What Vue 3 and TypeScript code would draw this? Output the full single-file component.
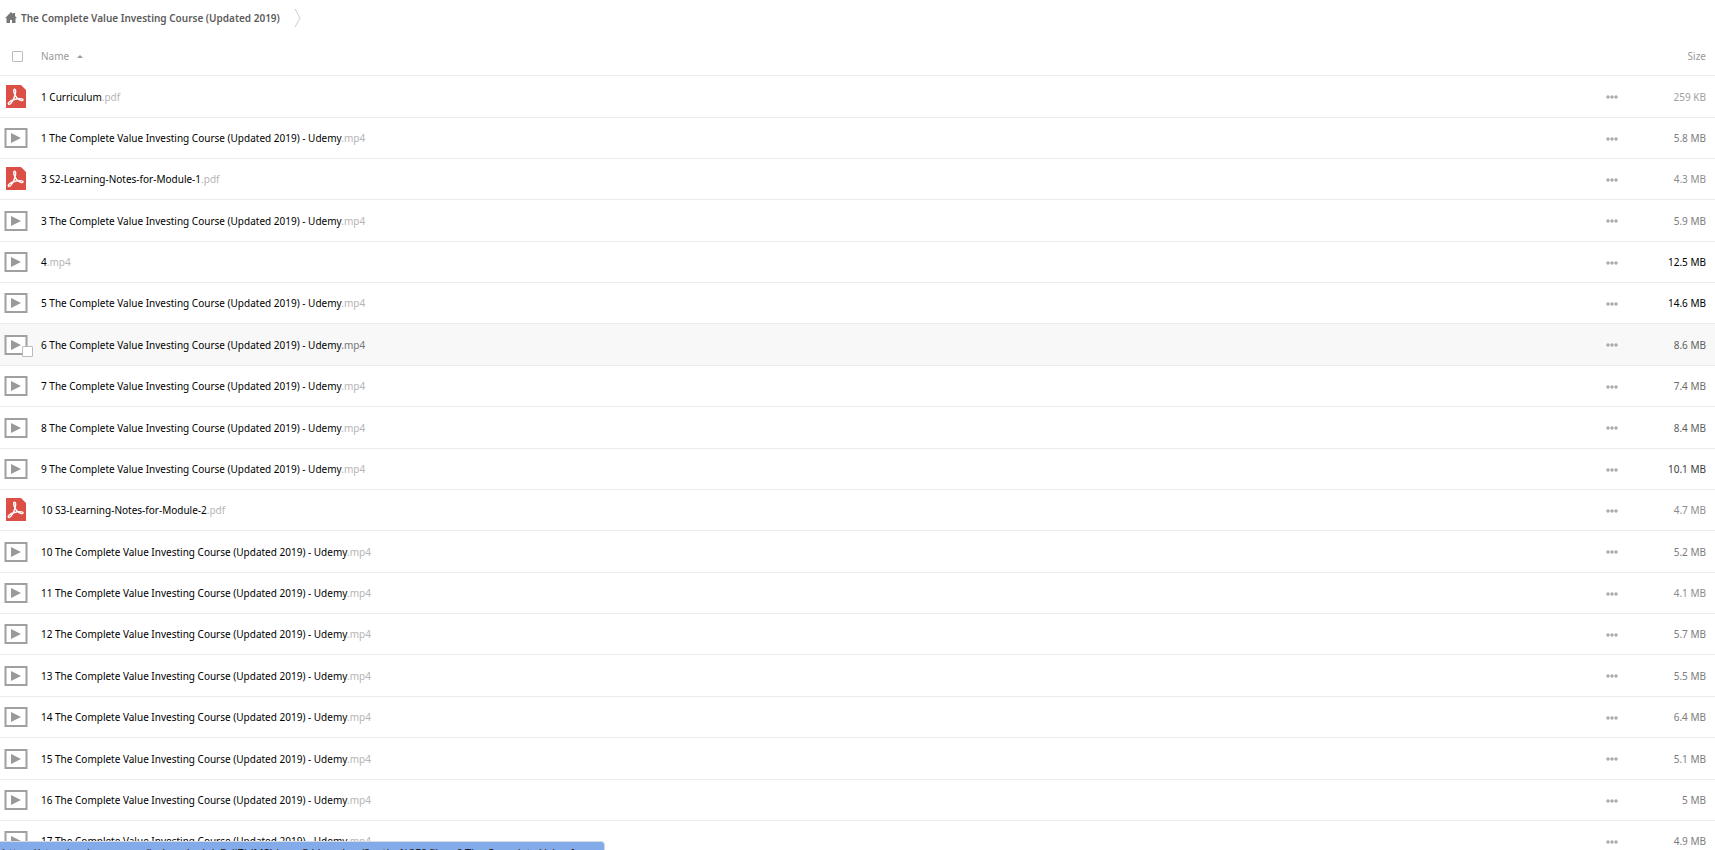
<script setup lang="ts">
import { ref } from 'vue'

interface FileEntry {
  name: string
  ext: 'pdf' | 'mp4'
  size: string
  tone: string
}

const course = 'The Complete Value Investing Course (Updated 2019)'
const lesson = (n: number, size: string, tone: string): FileEntry => ({
  name: `${n} ${course} - Udemy`,
  ext: 'mp4',
  size,
  tone,
})

const files: FileEntry[] = [
  { name: '1 Curriculum', ext: 'pdf', size: '259 KB', tone: 'faint' },
  lesson(1, '5.8 MB', 'mid'),
  { name: '3 S2-Learning-Notes-for-Module-1', ext: 'pdf', size: '4.3 MB', tone: 'soft' },
  lesson(3, '5.9 MB', 'mid'),
  { name: '4', ext: 'mp4', size: '12.5 MB', tone: 'black' },
  lesson(5, '14.6 MB', 'black'),
  lesson(6, '8.6 MB', 'strong'),
  lesson(7, '7.4 MB', 'firm'),
  lesson(8, '8.4 MB', 'strong'),
  lesson(9, '10.1 MB', 'dark'),
  { name: '10 S3-Learning-Notes-for-Module-2', ext: 'pdf', size: '4.7 MB', tone: 'soft' },
  lesson(10, '5.2 MB', 'mid'),
  lesson(11, '4.1 MB', 'soft'),
  lesson(12, '5.7 MB', 'mid'),
  lesson(13, '5.5 MB', 'mid'),
  lesson(14, '6.4 MB', 'mid'),
  lesson(15, '5.1 MB', 'mid'),
  lesson(16, '5 MB', 'mid'),
  lesson(17, '4.9 MB', 'mid'),
]

const active = 6
const allSelected = ref(false)
const activeSelected = ref(false)
</script>

<template>
  <main class="page">
    <nav class="crumbs" aria-label="Breadcrumb">
      <a class="home" href="#">
        <svg width="12" height="11" viewBox="0 0 12 11" aria-hidden="true">
          <path d="M6 0 8 2V1h2v3l2 2.200h-1.500V11H7V8H5v3H1.500V6.200H0z" fill="#777" />
        </svg>
        <span>{{ course }}</span>
      </a>
      <svg class="sep" width="8" height="20" viewBox="0 0 8 20" aria-hidden="true">
        <path d="M1 1 6 10 1 19" fill="none" stroke="#ccc" />
      </svg>
    </nav>

    <table class="files">
      <thead>
        <tr>
          <th class="pick"><input v-model="allSelected" type="checkbox" aria-label="Select all" /></th>
          <th class="name">
            <button type="button" class="sort">
              Name
              <svg width="6" height="3" viewBox="0 0 6 3" aria-hidden="true"><path d="M0 3 3 0 6 3z" fill="#999" /></svg>
            </button>
          </th>
          <th class="more"></th>
          <th class="size"><button type="button" class="sort">Size</button></th>
        </tr>
      </thead>
      <tbody>
        <tr v-for="(file, i) in files" :key="i" :class="{ active: i === active }">
          <td class="pick">
            <span class="thumb">
              <svg v-if="file.ext === 'pdf'" width="24" height="24" viewBox="0 0 24 24" aria-hidden="true">
                <path d="M2 0h15l5 5v18H2z" fill="#dc4f46" />
                <path
                  d="M10 4.500c2-1 2 2 1 5.500-1 4-4 9.500-6 9.500-2.500-1 1.500-4 5.500-5 4-1.200 8.500-1.200 8.500.3 0 1.700-4 .5-6-1.800-2.500-3-4-7.500-3-8.500z"
                  fill="none"
                  stroke="#fff"
                  stroke-width="1.400"
                />
              </svg>
              <svg v-else width="24" height="24" viewBox="0 0 24 24" aria-hidden="true">
                <rect x="1.500" y="3" width="21" height="18" fill="#fff" stroke="#a0a0a0" stroke-width="2" />
                <path d="M7 7v10l10-5z" fill="#999" />
              </svg>
              <input
                v-if="i === active"
                v-model="activeSelected"
                type="checkbox"
                class="badge"
                :aria-label="`Select ${file.name}`"
              />
            </span>
          </td>
          <td class="name">
            <a href="#">{{ file.name }}<span class="ext">.{{ file.ext }}</span></a>
          </td>
          <td class="more">
            <button type="button" :aria-label="`Actions for ${file.name}`">
              <svg width="12" height="4" viewBox="0 0 12 4" aria-hidden="true">
                <circle cx="2" cy="2" r="1.700" /><circle cx="6" cy="2" r="1.700" /><circle cx="10" cy="2" r="1.700" />
              </svg>
            </button>
          </td>
          <td class="size" :class="file.tone">{{ file.size }}</td>
        </tr>
      </tbody>
    </table>

    <div class="status">
      https://stor.cloudspace.com/index.php/s/eDdjZjdMShirwwQ/download?path=%2F&amp;files=6 The Complete Value I...
    </div>
  </main>
</template>

<style>
body {
  margin: 0;
  background: #fff;
}
</style>

<style scoped>
.page {
  height: 100vh;
  overflow: hidden;
  font: 10px/16px "Noto Sans", "Open Sans", sans-serif;
  color: #000;
}
a {
  color: inherit;
  text-decoration: none;
}
button {
  padding: 0;
  border: 0;
  background: none;
  color: inherit;
  font: inherit;
}
.crumbs {
  display: flex;
  align-items: center;
  gap: 14px;
  height: 35px;
  padding-left: 5px;
  box-sizing: border-box;
}
.home {
  display: flex;
  align-items: center;
  gap: 4px;
  font-weight: 600;
  color: #5c5c5c;
}
.files {
  width: 100%;
  table-layout: fixed;
  border-collapse: separate;
  border-spacing: 0;
}
th,
td {
  padding: 0;
  height: 40px;
  border-bottom: 1px solid #ebebeb;
  font-weight: 400;
  text-align: left;
  vertical-align: middle;
}
tr:is(:nth-child(1), :nth-child(4), :nth-child(7), :nth-child(9), :nth-child(12), :nth-child(15), :nth-child(17)) td {
  height: 41px;
}
thead tr:nth-child(1) th {
  height: 38px;
  padding-top: 2px;
  color: #999;
}
th.pick,
td.pick {
  width: 41px;
}
th.more,
td.more {
  width: 30px;
}
th.size,
td.size {
  width: 70px;
  padding-right: 9px;
  text-align: right;
}
.sort {
  display: inline-flex;
  align-items: center;
  gap: 8px;
}
input {
  appearance: none;
  display: block;
  box-sizing: border-box;
  width: 11px;
  height: 11px;
  margin: 0;
  border: 1px solid #bbb;
  border-radius: 1px;
  background: #fff;
}
th.pick input {
  margin-left: 12px;
}
.thumb {
  position: relative;
  display: block;
  width: 24px;
  height: 24px;
  margin-left: 4px;
}
.thumb svg {
  display: block;
}
.badge {
  position: absolute;
  right: -5px;
  bottom: 0;
}
.ext {
  color: #b5b5b5;
}
.active td {
  background: #f8f8f8;
}
.active .ext {
  color: #777;
}
td.more button {
  display: block;
  padding: 5px 0 4px;
}
td.more svg {
  display: block;
  fill: #aaa;
}
.faint { color: #a0a0a0; }
.soft { color: #8c8c8c; }
.mid { color: #7c7c7c; }
.firm { color: #6c6c6c; }
.strong { color: #5e5e5e; }
.dark { color: #3c3c3c; }
.black { color: #000; }
.status {
  position: fixed;
  left: 0;
  bottom: 0;
  box-sizing: border-box;
  width: 605px;
  height: 9px;
  padding: 3px 2px 0;
  overflow: hidden;
  border-top: 1px solid #d5d9e0;
  border-right: 1px solid #d5d9e0;
  border-top-right-radius: 4px;
  background: #83abe9;
  font-size: 11px;
  white-space: nowrap;
  color: #222;
}
</style>
